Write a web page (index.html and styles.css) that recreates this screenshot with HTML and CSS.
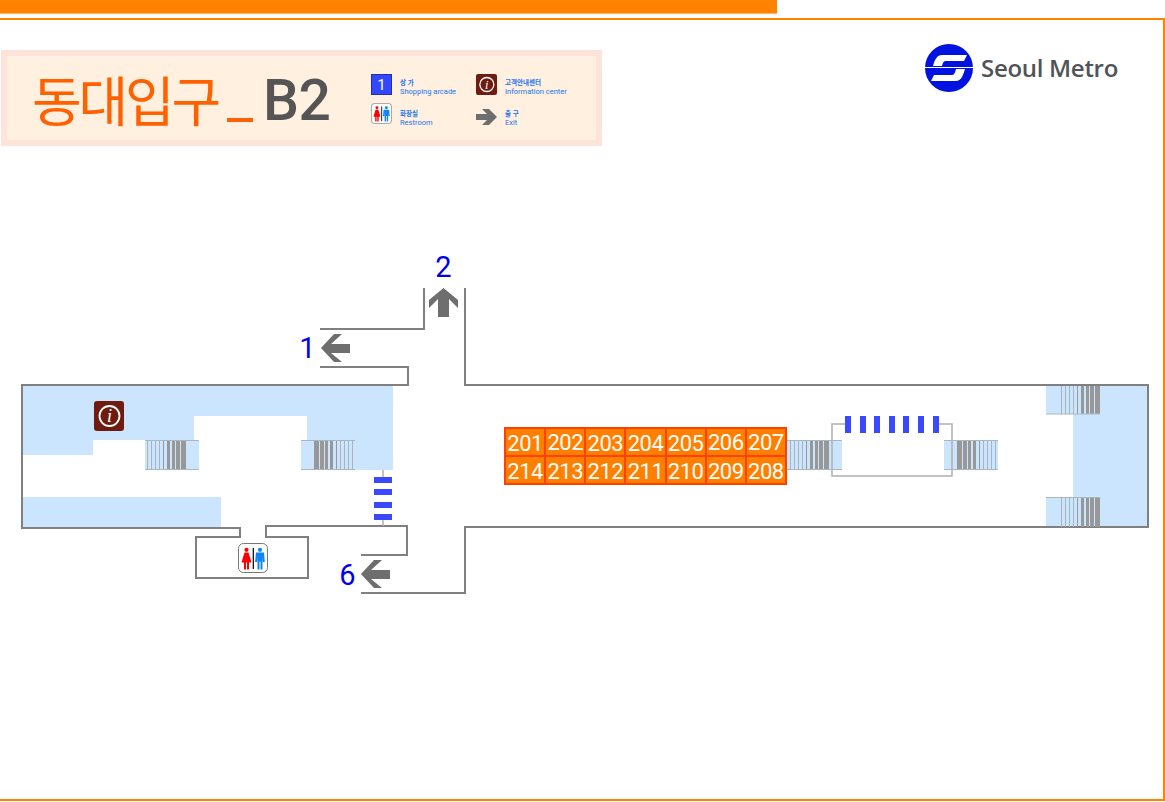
FILE: index.html
```html
<!DOCTYPE html>
<html lang="ko">
<head>
<meta charset="utf-8">
<title>동대입구 B2</title>
<link rel="stylesheet" href="styles.css">
</head>
<body>
<div class="page">
  <div class="topbar"></div>
  <div class="frame">
    <div class="head">
      <section class="panel">
        <h1 class="title"><span class="name">동대입구</span><span class="under"></span><span class="floor">B2</span></h1>
        <div class="legend">
          <div class="lg">
            <svg class="ico" viewBox="0 0 21 21"><rect class="lg-box" x=".5" y=".5" width="20" height="20"/><text class="lg-one" x="10.5" y="16">1</text></svg>
            <p class="lg-text"><span class="ko">상 가</span><span>Shopping arcade</span></p>
          </div>
          <div class="lg">
            <svg class="ico" viewBox="0 0 30 30"><use href="#info"/></svg>
            <p class="lg-text"><span class="ko">고객안내센터</span><span>Information center</span></p>
          </div>
          <div class="lg">
            <svg class="ico" viewBox="0 0 30 30"><use href="#wc"/></svg>
            <p class="lg-text lg-low"><span class="ko">화장실</span><span>Restroom</span></p>
          </div>
          <div class="lg">
            <svg class="ico ico-arrow" viewBox="0 0 21 16" preserveAspectRatio="none"><path class="arrow" d="M21 8 13 0H6l5 5H0v6h11l-5 5h7z"/></svg>
            <p class="lg-text lg-low"><span class="ko">출 구</span><span>Exit</span></p>
          </div>
        </div>
      </section>
      <div class="logo">
        <svg class="logo-mark" viewBox="-24 -24 48 48">
          <circle class="logo-disc" r="24"/>
          <path class="logo-s" d="M18-13H-7C-12-13-14-9-16-2H-7C-6-6-5-7-3-7H15ZM-18 13H7C12 13 14 8 16 1H7C6 5 5 7 3 7H-15ZM-24-1H24V0H-24Z"/>
        </svg>
        <span class="logo-name">Seoul Metro</span>
      </div>
    </div>

    <div class="stage">
      <svg class="map" viewBox="0 146 1163 654" width="1163" height="654">
        <defs>
          <g id="stair">
            <rect class="s1" x="2" width="1" height="30"/>
            <rect class="s1" x="6" width="1" height="30"/>
            <rect class="s1" x="10" width="1" height="30"/>
            <rect class="s1" x="14" width="1" height="30"/>
            <rect class="s2" x="18" width="1" height="30"/>
            <rect class="s2" x="22" width="3" height="30"/>
            <rect class="s2" x="27" width="3" height="30"/>
            <rect class="s2" x="31" width="4" height="30"/>
            <rect class="s2" x="36" width="5" height="30"/>
          </g>
          <g id="info">
            <rect class="info-bg" width="30" height="30" rx="3"/>
            <circle class="info-ring" cx="15.5" cy="15" r="10"/>
            <text class="info-i" x="15.5" y="21">i</text>
          </g>
          <g id="wc">
            <rect class="wc-bg" x=".5" y=".5" width="29" height="29" rx="5"/>
            <circle class="w" cx="8.500" cy="6.800" r="2.100"/>
            <path class="w" d="M6.500 9.500h4l3 10h-2.500v7H9v-7H8v7H6v-7H3.500z"/>
            <rect class="wc-bar" x="14.700" y="5" width="1.200" height="21"/>
            <circle class="m" cx="22" cy="6.800" r="2.100"/>
            <path class="m" d="M18 9.500h8l.8 9.500h-2L24.500 13v13.500h-2v-8h-1v8h-2V13l-.4 6h-2z"/>
          </g>
        </defs>

        <!-- shaded zones -->
        <path class="zone" d="M23 386H393V470H301V440H307V416H194V440H93V455H23Z"/>
        <rect class="zone" x="23" y="497" width="198" height="30"/>
        <rect class="zone" x="145" y="440" width="54" height="30"/>
        <rect class="zone" x="787" y="440" width="55" height="30"/>
        <rect class="zone" x="944" y="440" width="54" height="30"/>
        <rect class="zone" x="1073" y="386" width="75" height="140"/>
        <rect class="zone" x="1046" y="386" width="54" height="28"/>
        <rect class="zone" x="1046" y="497" width="54" height="30"/>

        <!-- walls -->
        <path class="wall" d="M320 329H424V288M320 367H408V385H22V528H240V537H196V578H308V537H266V526H407V555H361M361 593H465V527H1148V385H465V288"/>
        <path class="thin" d="M383 470V477M383 520V526"/>
        <path class="thin" d="M845 424H832V476H952V424H939"/>

        <!-- stairs -->
        <use href="#stair" transform="translate(145 440)"/>
        <use href="#stair" transform="translate(355 440) scale(-1 1)"/>
        <use href="#stair" transform="translate(788 440)"/>
        <use href="#stair" transform="translate(998 440) scale(-1 1)"/>
        <use href="#stair" transform="translate(1059 386) scale(1 .93)"/>
        <use href="#stair" transform="translate(1059 497)"/>
        <path class="tread" d="M145 440.500H199M145 469.500H199M301 440.500H355M301 469.500H355M787 440.500H842M787 469.500H842M944 440.500H998M944 469.500H998M1046 414H1100M1046 497.500H1100"/>

        <!-- blue stripes -->
        <rect class="stripe" x="374" y="477" width="18" height="6"/>
        <rect class="stripe" x="374" y="489" width="18" height="6"/>
        <rect class="stripe" x="374" y="502" width="18" height="6"/>
        <rect class="stripe" x="374" y="514" width="18" height="6"/>
        <rect class="stripe" x="845" y="416" width="6" height="17"/>
        <rect class="stripe" x="860" y="416" width="6" height="17"/>
        <rect class="stripe" x="874" y="416" width="6" height="17"/>
        <rect class="stripe" x="889" y="416" width="6" height="17"/>
        <rect class="stripe" x="903" y="416" width="6" height="17"/>
        <rect class="stripe" x="918" y="416" width="6" height="17"/>
        <rect class="stripe" x="933" y="416" width="6" height="17"/>

        <!-- exits -->
        <path class="arrow" d="M443.500 288 458 300V308L449 299V317H438V299L429 308V300Z"/>
        <path class="arrow" d="M321 348 334 334H342L331 344H350V353H331L342 362H334Z"/>
        <path class="arrow" d="M361 574 374 560H382L371 570H390V579H371L382 588H374Z"/>
        <text class="exit" x="443.500" y="277">2</text>
        <text class="exit" x="307.500" y="358">1</text>
        <text class="exit" x="347.500" y="585">6</text>

        <use href="#info" x="94" y="401"/>
        <use href="#wc" x="238" y="543"/>
      </svg>

      <div class="shops">
        <div class="shop">201</div><div class="shop up">202</div><div class="shop">203</div><div class="shop">204</div><div class="shop">205</div><div class="shop up">206</div><div class="shop up">207</div>
        <div class="shop">214</div><div class="shop">213</div><div class="shop">212</div><div class="shop">211</div><div class="shop">210</div><div class="shop">209</div><div class="shop">208</div>
      </div>
    </div>
  </div>
</div>
</body>
</html>
```

FILE: styles.css
```css
* { box-sizing: border-box; }
html, body { margin: 0; padding: 0; background: #fff; }
body { font-family: "Noto Sans", "Noto Sans CJK KR", sans-serif; overflow: hidden; }

.page { width: 1165px; height: 802px; display: flex; flex-direction: column; }
.topbar { width: 777px; height: 14px; background: #ff8300; border-bottom: 1px solid #ffb566; flex: none; }
.frame {
  width: 1165px; height: 783px; margin-top: 4px; flex: none;
  border-top: 2px solid #ff8300; border-right: 2px solid #ff8300; border-bottom: 2px solid #ff8300;
}

.head { height: 126px; padding: 30px 45px 0 1px; display: flex; justify-content: space-between; align-items: flex-start; }

.panel {
  width: 601px; height: 96px; background: #fff0e0; border: 6px solid #fee3da;
  display: flex; align-items: center; padding-left: 25px;
}
.title { margin: 0; width: 339px; display: flex; align-items: center; font-weight: 400; flex: none; }
.name { font-family: "Noto Sans CJK KR", sans-serif; font-size: 54px; line-height: 60px; font-weight: 400; color: #ff6000; letter-spacing: -3.200px; position: relative; top: 1px; }
.under { width: 26px; height: 4px; background: #ff6000; margin: 44px 10px 0 9px; flex: none; }
.floor { font-family: Roboto, sans-serif; font-size: 57px; line-height: 60px; font-weight: 500; color: #555; letter-spacing: -.5px; position: relative; top: 3px; }

.legend { display: grid; grid-template-columns: 105px 1fr; row-gap: 8px; margin-top: 1px; }
.lg { display: flex; align-items: flex-start; gap: 8px; height: 21px; }
.ico { width: 21px; height: 21px; flex: none; display: block; }
.ico-arrow { height: 16px; margin-top: 6px; }
.lg-text { margin: 0; padding-top: 4px; display: flex; flex-direction: column; font-family: Roboto, "Noto Sans CJK KR", sans-serif; font-size: 7.500px; line-height: 9px; color: #1a75f0; white-space: nowrap; }
.lg-low { padding-top: 6px; }
.ko { font-family: "Noto Sans CJK KR", sans-serif; font-size: 6.500px; font-weight: 700; }
.lg-box { fill: #3347ff; stroke: #2030a8; }
.lg-one { fill: #fff; font-family: Roboto, sans-serif; font-size: 15px; text-anchor: middle; }

.logo { display: flex; align-items: center; gap: 8px; margin-top: -6px; }
.logo-mark { width: 48px; height: 48px; display: block; flex: none; }
.logo-disc { fill: #0012e0; }
.logo-s { fill: #fff; }
.logo-name { font-family: "Open Sans", sans-serif; font-weight: 600; font-size: 24px; line-height: 30px; color: #505458; letter-spacing: -.3px; }

.stage { position: relative; width: 1163px; height: 654px; }
.map { display: block; }

.zone { fill: #cce5ff; }
.wall { fill: none; stroke: #808080; stroke-width: 2; }
.thin { fill: none; stroke: #b0b0b0; stroke-width: 1.500; }
.s1 { fill: #a9b4bc; }
.s2 { fill: #989898; }
.tread { fill: none; stroke: #a9b8bc; stroke-width: 1; }
.stripe { fill: #3a48ff; }
.arrow { fill: #6e6e6e; }
.exit { fill: #0000ee; font-family: Roboto, sans-serif; font-weight: 400; font-size: 29px; text-anchor: middle; }

.info-bg { fill: #6e1c0f; }
.info-ring { fill: none; stroke: #fff; stroke-width: 1.800; }
.info-i { fill: #fff; font-family: "Liberation Serif", serif; font-style: italic; font-size: 18px; text-anchor: middle; }
.wc-bg { fill: #fff; stroke: #777; stroke-width: 1; }
.w { fill: #f00; }
.m { fill: #0a84ff; }
.wc-bar { fill: #000; }

.shops {
  position: absolute; left: 504px; top: 281px; width: 283px; height: 58px;
  display: grid; grid-template-columns: repeat(7, 1fr); grid-template-rows: 1fr 1fr;
  background: #ff8000; border: 1px solid #ff4000;
}
.shop {
  border: 1px solid #ff4000; display: flex; align-items: center; justify-content: center; padding-top: 3px;
  color: #fff; font-family: Roboto, sans-serif; font-weight: 400; font-size: 22px; line-height: 1; letter-spacing: -.5px;
}
.up { padding-top: 1px; }
```
